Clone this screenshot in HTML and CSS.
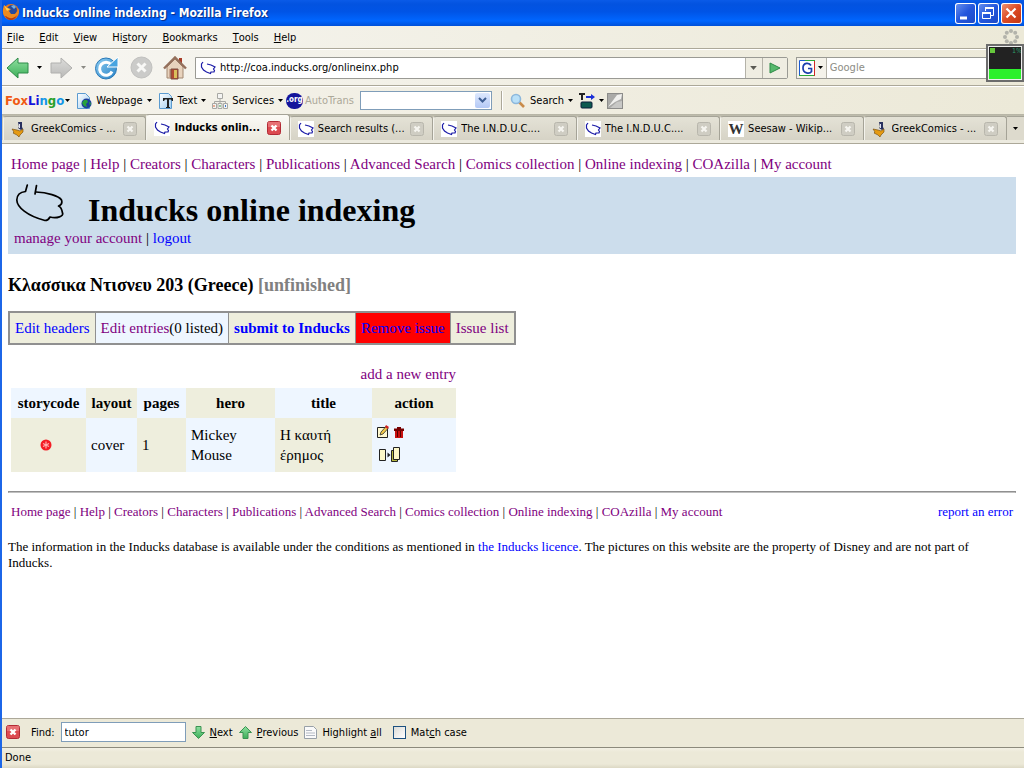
FILE: index.html
```html
<!DOCTYPE html>
<html lang="en">
<head>
    <meta charset="UTF-8">
    <meta name="viewport" content="width=device-width, initial-scale=1">
    <title>Inducks online indexing</title>
    <link rel="stylesheet" href="styles.css">
</head>
<body>
    <!-- Shared icons -->
    <svg class="defs" width="0" height="0">
        <defs>
            <linearGradient id="green" x1="0" y1="0" x2="0" y2="1"><stop offset="0" stop-color="#8fe0a0"/><stop offset="1" stop-color="#3cae58"/></linearGradient>
            <linearGradient id="grey" x1="0" y1="0" x2="0" y2="1"><stop offset="0" stop-color="#dcdcda"/><stop offset="1" stop-color="#b9b9b7"/></linearGradient>
            <linearGradient id="blue" x1="0" y1="0" x2="1" y2="1"><stop offset="0" stop-color="#8ccdf2"/><stop offset="1" stop-color="#2a83c6"/></linearGradient>
            <linearGradient id="page" x1="0" y1="0" x2="1" y2="1"><stop offset="0" stop-color="#ffffff"/><stop offset="1" stop-color="#9fcdf0"/></linearGradient>
        </defs>
        <symbol id="duck" viewBox="0 0 16 16">
            <rect width="16" height="16" fill="#fff"/>
            <path d="M3 2L1.500 4v3l2 3 3 2 4 1.500L11 12h3l.5-1.500L13.500 9l1.500-2-4-2-4-1" fill="none" stroke="#1c1ca8" stroke-width="1.200"/>
        </symbol>
        <symbol id="greek" viewBox="0 0 16 16">
            <path d="M7 1h4v5l1 2-2 1-3-2 1-1z" fill="#28305e"/>
            <path d="M8 3h1v4H8z" fill="#dfe3f5"/>
            <path d="M1 8l5 1 3 1 3-2v3l-3 3-1 2-2-2-4-2 1-1z" fill="#e59a12" stroke="#6b4508" stroke-width=".6"/>
        </symbol>
        <symbol id="close" viewBox="0 0 14 14">
            <rect x=".5" y=".5" width="13" height="13" rx="2" fill="#cfcdc3" stroke="#b8b6ac"/>
            <path d="M4.500 4.500l5 5M9.500 4.500l-5 5" stroke="#f6f5f0" stroke-width="2.200"/>
        </symbol>
        <symbol id="close-red" viewBox="0 0 14 14">
            <rect x=".5" y=".5" width="13" height="13" rx="2" fill="#dc4a50" stroke="#b22a35"/>
            <path d="M1 1h12v5H1z" fill="#ee8a8c" opacity=".6"/>
            <path d="M4.500 4.500l5 5M9.500 4.500l-5 5" stroke="#fff" stroke-width="2.400"/>
        </symbol>
        <symbol id="down" viewBox="0 0 5 3"><path d="M0 0h5L2.500 3z" fill="currentColor"/></symbol>
    </svg>

    <div class="window">
        <header class="titlebar">
            <svg class="app-icon" width="18" height="18" viewBox="0 0 18 18">
                <circle cx="9" cy="9" r="8" fill="#e8761a"/>
                <circle cx="10" cy="7" r="5" fill="#274a9c"/>
                <path d="M9 3l3-1 2 2-2 2z" fill="#6fb0e6"/>
                <path d="M2 2l3 3 4 1-2 2 2 3h4l3-3 1-3c1 6-3 11-8 11S0 12 1 6z" fill="#ee8a1e"/>
                <path d="M2 2l3 3 3 1-3 2z" fill="#ffd34e"/>
                <path d="M4 13c3 3 8 3 11-1-2 6-9 7-12 1z" fill="#b63a10"/>
            </svg>
            <h1 class="title">Inducks online indexing - Mozilla Firefox</h1>
            <div class="window-buttons">
                <button class="wbtn" aria-label="Minimize"><svg width="21" height="21"><path d="M5 15h7" stroke="#fff" stroke-width="3"/></svg></button>
                <button class="wbtn" aria-label="Restore"><svg width="21" height="21" fill="none" stroke="#fff"><path d="M7.500 8V5.500h8v7H13"/><path d="M7 5h9M4 10h9" stroke-width="2"/><path d="M4.500 9.500h8v6h-8z"/></svg></button>
                <button class="wbtn wbtn-close" aria-label="Close"><svg width="21" height="21"><path d="M5.500 5.500l9 9M14.500 5.500l-9 9" stroke="#fff" stroke-width="2.200"/></svg></button>
            </div>
        </header>

        <nav class="menubar">
            <button><u>F</u>ile</button>
            <button><u>E</u>dit</button>
            <button><u>V</u>iew</button>
            <button>Hi<u>s</u>tory</button>
            <button><u>B</u>ookmarks</button>
            <button><u>T</u>ools</button>
            <button><u>H</u>elp</button>
            <svg class="throbber" width="16" height="16" viewBox="0 0 16 16" fill="#b3b3ab">
                <circle cx="8" cy="2" r="2"/><circle cx="12.200" cy="3.800" r="2"/><circle cx="14" cy="8" r="2"/><circle cx="12.200" cy="12.200" r="2"/>
                <circle cx="8" cy="14" r="2"/><circle cx="3.800" cy="12.200" r="2"/><circle cx="2" cy="8" r="2"/><circle cx="3.800" cy="3.800" r="2"/>
            </svg>
        </nav>

        <div class="navbar">
            <button class="nav-btn" aria-label="Back"><svg width="23" height="22"><path d="M1 11L12 1v5h10v10H12v5z" fill="url(#green)" stroke="#2d8a48"/></svg></button>
            <button class="nav-arrow" aria-label="Back history"><svg width="5" height="3"><use href="#down"/></svg></button>
            <button class="nav-btn" aria-label="Forward"><svg width="23" height="22"><path d="M22 11L11 1v5H1v10h10v5z" fill="url(#grey)" stroke="#b0b0ae"/></svg></button>
            <button class="nav-arrow dim" aria-label="Forward history"><svg width="5" height="3"><use href="#down"/></svg></button>
            <button class="nav-btn" aria-label="Reload"><svg width="24" height="24" viewBox="0 0 24 24">
                <circle cx="11" cy="12.500" r="10.500" fill="url(#blue)" stroke="#2878b8"/>
                <path d="M17 15.500a6.500 6.500 0 1 1-1-7" fill="none" stroke="#fff" stroke-width="3"/>
                <path d="M23 1v10H12z" fill="#48a4e0" stroke="#fff"/>
            </svg></button>
            <button class="nav-btn" aria-label="Stop"><svg width="23" height="23">
                <circle cx="11.500" cy="11.500" r="10.500" fill="#cbcbc9" stroke="#c0c0be"/>
                <path d="M7.500 7.500l8 8M15.500 7.500l-8 8" stroke="#f8f8f6" stroke-width="3"/>
            </svg></button>
            <button class="nav-btn nav-home" aria-label="Home"><svg width="24" height="24" viewBox="0 0 24 24">
                <path d="M16 2h3v6h-3z" fill="#a83c28"/>
                <path d="M4 11l8-8 8 8v11H4z" fill="#e8d3bd" stroke="#a28770"/>
                <path d="M1 12.500L12 1.500l11 11" fill="none" stroke="#94705c" stroke-width="2.400"/>
                <path d="M6 13h5v9H6z" fill="#c9a994"/>
                <path d="M8 13h7v10H8z" fill="#b04a32" stroke="#7a5040"/>
                <path d="M11 14h3v8h-3z" fill="#d9c05c"/>
            </svg></button>
            <div class="urlbar">
                <svg class="favicon" width="16" height="16"><use href="#duck"/></svg>
                <input type="text" aria-label="Address" value="http://coa.inducks.org/onlineinx.php">
                <button class="url-drop" aria-label="Show history"><svg width="7" height="4"><use href="#down"/></svg></button>
                <button class="url-go" aria-label="Go"><svg width="12" height="12"><path d="M1 1l10 5L1 11z" fill="#56b96c" stroke="#2f8a48"/></svg></button>
            </div>
            <div class="searchbar">
                <button class="engine" aria-label="Search engine">
                    <svg width="16" height="16" viewBox="0 0 16 16">
                        <rect width="16" height="16" fill="#fff"/>
                        <path d="M.5 16V.5H16" fill="none" stroke="#1b5ad0"/>
                        <path d="M15.500 0v16" stroke="#d02828"/><path d="M0 15.500h15M6 .5h10" stroke="#2aa83a"/>
                        <path d="M12 5.500C10.500 2.500 4 2 4 8s7 6 8.500 3.500V8.500H9" fill="none" stroke="#1b3fae" stroke-width="1.700"/>
                    </svg>
                    <svg width="5" height="3"><use href="#down"/></svg>
                </button>
                <input type="text" aria-label="Search" placeholder="Google">
            </div>
        </div>

        <div class="foxbar">
            <button class="foxlingo"><span><b class="f1">Fox</b><b class="f2">Li</b><b class="f3">n</b><b class="f4">g</b><b class="f3">o</b></span><svg width="5" height="3"><use href="#down"/></svg></button>
            <button class="tool"><svg width="16" height="16" viewBox="0 0 16 16"><path d="M1.500.5h8l4 4v11h-12z" fill="url(#page)" stroke="#5b9bd0"/><circle cx="10.500" cy="10.500" r="5" fill="#1c3f9e"/><path d="M8 7l3 0 1 2-2 2 1 3-3-1-2-3zM13 9l2 1-1 3z" fill="#27a13c"/></svg>Webpage<svg width="5" height="3"><use href="#down"/></svg></button>
            <button class="tool"><svg width="16" height="16" viewBox="0 0 16 16"><path d="M1.500.5h9l3 3v12h-12z" fill="url(#page)" stroke="#5b9bd0"/><path d="M5 5h10v3h-1l-1-1.500h-2V14h1v1H8v-1h1V6.500H7L6 8H5z" fill="#222"/></svg>Text<svg width="5" height="3"><use href="#down"/></svg></button>
            <button class="tool tool-services"><svg width="16" height="16" viewBox="0 0 16 16" fill="#f4f4f2" stroke="#a8a8a4"><path d="M8 5v5M2.500 11V8.500h11V11" fill="none"/><path d="M5.500.5h5v5h-5zM.5 10.500h4v5h-4zM6 10.500h4v5H6zM11.500 10.500h4v5h-4z"/><path d="M2 12v2" stroke="#e06a3a"/><path d="M8 12v2" stroke="#3aa04a"/><path d="M13.500 12v2" stroke="#3a7ad0"/></svg>Services<svg width="5" height="3"><use href="#down"/></svg></button>
            <button class="tool tool-org"><span class="org">.org</span>AutoTrans</button>
            <span class="combo">
                <select aria-label="Translate"><option></option></select>
                <span class="combo-arrow"><svg width="9" height="7"><path d="M1 1l3.500 3.500L8 1" fill="none" stroke="#3f5f94" stroke-width="2"/></svg></span>
            </span>
            <span class="sep"></span>
            <button class="tool tool-search"><svg width="16" height="16" viewBox="0 0 16 16"><path d="M9 9l5 5" stroke="#c98b4a" stroke-width="2.600"/><circle cx="6" cy="6" r="4.500" fill="#b9e0f8" stroke="#8db8dc" stroke-width="1.600"/></svg>Search<svg width="5" height="3"><use href="#down"/></svg></button>
            <button class="tool tool-icons" aria-label="Translate text"><svg width="16" height="16" viewBox="0 0 16 16"><path d="M0 0h6v2H4v5H2V2H0z" fill="#222"/><path d="M7 3h5V1l4 3-4 3V5H7z" fill="#1a2fd8"/><rect x="2" y="9" width="11" height="6" rx="1" fill="#0e5a50" stroke="#0a1c3a"/></svg><svg width="5" height="3"><use href="#down"/></svg></button>
            <button class="tool tool-pen" aria-label="Settings"><svg width="16" height="16" viewBox="0 0 16 16"><rect x=".5" y=".5" width="15" height="15" fill="#aaaaa8" stroke="#8c8c8a"/><path d="M1 14L10 2l5-1-1 5-6 3z" fill="#f0f0ee"/><path d="M3 15l7-6 5-1v7z" fill="#c8c8c6"/></svg></button>
        </div>

        <div class="tabs">
            <button class="tab"><svg width="16" height="16"><use href="#greek"/></svg><span>GreekComics - ...</span><svg width="14" height="14"><use href="#close"/></svg></button>
            <button class="tab active"><svg width="16" height="16"><use href="#duck"/></svg><span>Inducks onlin...</span><svg width="14" height="14"><use href="#close-red"/></svg></button>
            <button class="tab"><svg width="16" height="16"><use href="#duck"/></svg><span>Search results (...</span><svg width="14" height="14"><use href="#close"/></svg></button>
            <button class="tab"><svg width="16" height="16"><use href="#duck"/></svg><span>The I.N.D.U.C....</span><svg width="14" height="14"><use href="#close"/></svg></button>
            <button class="tab"><svg width="16" height="16"><use href="#duck"/></svg><span>The I.N.D.U.C....</span><svg width="14" height="14"><use href="#close"/></svg></button>
            <button class="tab"><i class="wiki">W</i><span>Seesaw - Wikip...</span><svg width="14" height="14"><use href="#close"/></svg></button>
            <button class="tab"><svg width="16" height="16"><use href="#greek"/></svg><span>GreekComics - ...</span><svg width="14" height="14"><use href="#close"/></svg></button>
            <button class="tab-list" aria-label="List all tabs"><svg width="5" height="3"><use href="#down"/></svg></button>
        </div>

        <main class="page">
            <nav class="links">
                <a href="#">Home page</a> | <a href="#">Help</a> | <a href="#">Creators</a> | <a href="#">Characters</a> | <a href="#">Publications</a> | <a href="#">Advanced Search</a> | <a href="#">Comics collection</a> | <a href="#">Online indexing</a> | <a href="#">COAzilla</a> | <a href="#">My account</a>
            </nav>
            <div class="banner">
                <div class="banner-top">
                    <svg width="50" height="39" viewBox="-1 0 50 39" fill="none" stroke="#000" stroke-width="1.700" stroke-linecap="round" stroke-linejoin="round">
                        <path d="M12.300 2L10.500 8.500C5 9 2 11 1.800 17C2 24 12 33 30 37.500C33 37.500 34 36 35 34C42 36 49 33 47.500 30C47 27 46 24 43.500 23C46.500 22 47.500 20 46.500 17C44 13 32 9.500 21 9"/>
                        <path d="M21.500 2.500L20 11"/>
                    </svg>
                    <h2>Inducks online indexing</h2>
                </div>
                <div class="account"><a href="#">manage your account</a> | <a href="#" class="new">logout</a></div>
            </div>

            <h3>Κλασσικα Ντισνευ 203 (Greece) <span class="status">[unfinished]</span></h3>

            <table class="actions">
                <tr>
                    <td><a href="#" class="new">Edit headers</a></td>
                    <td class="on"><a href="#">Edit entries</a>(0 listed)</td>
                    <td><a href="#" class="new"><b>submit to Inducks</b></a></td>
                    <td class="remove"><a href="#" class="new">Remove issue</a></td>
                    <td><a href="#">Issue list</a></td>
                </tr>
            </table>

            <div class="entries-wrap">
                <div class="add"><a href="#">add a new entry</a></div>
                <table class="entries">
                    <tr>
                        <th class="c-code">storycode</th><th class="c-layout">layout</th><th class="c-pages">pages</th><th class="c-hero">hero</th><th class="c-title">title</th><th class="c-action">action</th>
                    </tr>
                    <tr>
                        <td class="center"><svg width="12" height="12" viewBox="0 0 12 12"><circle cx="6" cy="6" r="5.500" fill="#f41c24"/><path d="M6 2.500v7M3 4.500l6 3M9 4.500l-6 3" stroke="#ffb0b0" stroke-width="1.200"/></svg></td>
                        <td>cover</td>
                        <td>1</td>
                        <td>Mickey Mouse</td>
                        <td>Η καυτή έρημος</td>
                        <td>
                            <div class="icons">
                                <a href="#" aria-label="Edit"><svg width="12" height="13" viewBox="0 0 12 13"><path d="M.5 2.500h10v10H.5z" fill="#fff9d0" stroke="#222"/><path d="M3 10l1-3 5-5.500 2 2-5 5.500z" fill="#f0c848" stroke="#333" stroke-width=".8"/><path d="M9 0l3 2-1.500 2L8 2z" fill="#d02020"/></svg></a>
                                <a href="#" aria-label="Delete" class="trash"><svg width="10" height="11" viewBox="0 0 10 11"><path d="M0 1.500h3V0h4v1.500h3V4H0z" fill="#700"/><path d="M1 4h8v7H1z" fill="#c81010"/><path d="M3.500 4v6M6.500 4v6" stroke="#500"/></svg></a>
                            </div>
                            <div class="icons copy">
                                <a href="#" aria-label="Copy"><svg width="22" height="15" viewBox="0 0 22 15" fill="#fdf8c8" stroke="#222"><path d="M.5 2.500h6v11h-6z"/><path d="M12.500 3.500h6v11h-6z" fill="#b8b840"/><path d="M14.500.5h6v12h-6z"/><path d="M8.500 5.500l3 2.500-3 2.500z" fill="#222" stroke="none"/></svg></a>
                            </div>
                        </td>
                    </tr>
                </table>
            </div>

            <hr>
            <footer>
                <div class="foot-row">
                    <nav>
                        <a href="#">Home page</a> | <a href="#">Help</a> | <a href="#">Creators</a> | <a href="#">Characters</a> | <a href="#">Publications</a> | <a href="#">Advanced Search</a> | <a href="#">Comics collection</a> | <a href="#">Online indexing</a> | <a href="#">COAzilla</a> | <a href="#">My account</a>
                    </nav>
                    <a href="#" class="new">report an error</a>
                </div>
                <p>The information in the Inducks database is available under the conditions as mentioned in <a href="#" class="new">the Inducks licence</a>. The pictures on this website are the property of Disney and are not part of Inducks.</p>
            </footer>
        </main>

        <div class="findbar">
            <button aria-label="Close find bar"><svg width="14" height="14"><use href="#close-red"/></svg></button>
            <label for="find">Find:</label>
            <input type="text" id="find" value="tutor">
            <button class="find-btn"><svg width="13" height="13"><path d="M4 .5h5v6h3.500l-6 6-6-6H4z" fill="url(#green)" stroke="#3a9352"/></svg><span><u>N</u>ext</span></button>
            <button class="find-btn"><svg width="13" height="13"><path d="M4 12.500h5v-6h3.500l-6-6-6 6H4z" fill="url(#green)" stroke="#3a9352"/></svg><span><u>P</u>revious</span></button>
            <button class="find-btn"><svg width="13" height="13"><path d="M.5.5h9l3 3v9H.5z" fill="#fafafa" stroke="#98a0a8"/><path d="M2 4.500h6M2 7h9M2 9.500h9" stroke="#b4bac4"/></svg><span>Highlight <u>a</u>ll</span></button>
            <label class="check"><input type="checkbox"><span>Mat<u>c</u>h case</span></label>
        </div>
        <div class="statusbar">Done</div>

        <div class="cpu">
            <span class="cpu-dot"></span><span class="cpu-text">1%</span>
        </div>
    </div>
</body>
</html>
```
FILE: styles.css
```css
* {
    box-sizing: border-box;
}

body {
    margin: 0;
    font-family: "DejaVu Sans Condensed", "Noto Sans", sans-serif;
    font-size: 11px;
    color: #000;
    background: #fff;
}

button {
    font: inherit;
    color: inherit;
    background: none;
    border: none;
    padding: 0;
    margin: 0;
    display: flex;
    align-items: center;
    white-space: nowrap;
}

input, select {
    font: inherit;
    min-width: 0;
}

svg {
    display: block;
    flex-shrink: 0;
}

.defs {
    position: absolute;
}

.window {
    position: relative;
    display: flex;
    flex-direction: column;
    height: 100vh;
    overflow: hidden;
    border-left: 2px solid #1c66e8;
}

/* Title bar */
.titlebar {
    display: flex;
    align-items: center;
    flex-shrink: 0;
    height: 26px;
    padding-right: 2px;
    background: linear-gradient(#0a5be8, #0353e0 15%, #0054e6 45%, #0066ff 80%, #0050d8);
}

.app-icon {
    margin-bottom: 2px;
}

.title {
    flex: 1;
    margin: 0 0 0 2px;
    font-size: 12px;
    font-weight: bold;
    color: #fff;
    text-shadow: 1px 1px 1px #0a2a80;
}

.window-buttons {
    display: flex;
    gap: 2px;
}

.wbtn {
    width: 21px;
    height: 21px;
    border-radius: 3px;
    background: linear-gradient(135deg, #6b94f0, #2456dc 50%, #1c48c4);
    box-shadow: inset 0 0 0 1px #fff;
}

.wbtn-close {
    background: linear-gradient(135deg, #f09878, #dc4a24 50%, #c03410);
}

/* Menu */
.menubar {
    display: flex;
    align-items: center;
    flex-shrink: 0;
    gap: 15px;
    height: 23px;
    padding: 0 5px;
    background: linear-gradient(90deg, #f6f5f0, #ece9d8);
    border-bottom: 1px solid #aca899;
}

.throbber {
    margin-left: auto;
}

/* Navigation */
.navbar {
    display: flex;
    align-items: center;
    flex-shrink: 0;
    height: 37px;
    padding-left: 3px;
    background: linear-gradient(90deg, #f7f6f2, #ece9d8);
    border-top: 1px solid #fff;
    border-bottom: 1px solid #aca899;
}

.nav-btn {
    width: 24px;
    justify-content: center;
    margin-right: 10px;
}

.nav-btn:first-child, .nav-btn:nth-child(3) {
    margin-right: 0;
}

.nav-home {
    margin-right: 8px;
}

.nav-arrow {
    width: 20px;
    justify-content: center;
}

.nav-arrow.dim {
    color: #8a8a84;
    margin-right: 2px;
}

.urlbar {
    flex: 593;
    display: flex;
    align-items: center;
    height: 22px;
    background: #fff;
    border: 1px solid #9a9a94;
    border-radius: 0 2px 2px 0;
}

.favicon {
    margin: 0 4px;
}

.urlbar input, .searchbar input {
    flex: 1;
    height: 20px;
    padding: 0;
    border: none;
    outline: none;
    background: transparent;
}

.url-drop, .url-go {
    height: 20px;
    justify-content: center;
    color: #5a5a54;
    background: #efede2;
    border-left: 1px solid #b4b2a8;
}

.url-drop {
    width: 17px;
}

.url-go {
    width: 25px;
}

.searchbar {
    flex: 228;
    display: flex;
    height: 22px;
    margin-left: 8px;
    background: #fff;
    border: 1px solid #9a9a94;
    border-right: none;
}

.engine {
    width: 30px;
    justify-content: center;
    gap: 3px;
    background: #f4f2ea;
    border-right: 1px solid #b4b2a8;
}

.searchbar input {
    padding-left: 3px;
}

.searchbar input::placeholder {
    color: #8c8c84;
    opacity: 1;
}

/* FoxLingo toolbar */
.foxbar {
    display: flex;
    align-items: center;
    flex-shrink: 0;
    height: 28px;
    padding-left: 3px;
    background: linear-gradient(90deg, #f5f3ec, #ece9d8);
    border-top: 1px solid #fff;
}

.foxlingo {
    font-size: 13px;
    gap: 1px;
    margin-right: 6px;
}

.f1 { color: #f05a14; }
.f2 { color: #1414dc; }
.f3 { color: #1496e6; }
.f4 { color: #28a028; }

.tool {
    gap: 4px;
    margin-right: 6px;
}

.tool-services {
    margin-right: 3px;
}

.tool-org {
    gap: 2px;
    color: #aca899;
}

.org {
    width: 17px;
    height: 16px;
    line-height: 14px;
    border-radius: 8px;
    background: #14149c;
    color: #fff;
    font-size: 8px;
    font-weight: bold;
    text-align: center;
}

.combo {
    position: relative;
    width: 132px;
    height: 19px;
}

.combo select {
    width: 100%;
    height: 19px;
    appearance: none;
    background: #fff;
    border: 1px solid #7f9db9;
    border-radius: 0;
}

.combo-arrow {
    position: absolute;
    top: 2px;
    right: 2px;
    width: 15px;
    height: 15px;
    display: flex;
    align-items: center;
    justify-content: center;
    background: linear-gradient(#dde8fd, #b4c9f6);
    border-radius: 2px;
    pointer-events: none;
}

.sep {
    width: 2px;
    height: 19px;
    margin: 0 7px 0 9px;
    border-left: 1px solid #aca899;
    background: #fff;
}

.tool-icons {
    margin-right: 3px;
}

/* Tabs */
.tabs {
    display: flex;
    align-items: flex-end;
    flex-shrink: 0;
    height: 29px;
    padding-left: 1px;
    background: linear-gradient(#b5b3a4, #cbc8b8 4px, #d2cfc0);
    border-bottom: 3px solid #eceadf;
    box-shadow: 0 1px 0 #aca899;
}

.tab {
    flex: 1;
    min-width: 0;
    height: 24px;
    padding: 0 8px 0 7px;
    gap: 4px;
    background: linear-gradient(#e4e2d6, #d6d3c6);
    border: 1px solid #a5a397;
    border-left-color: #f4f3ec;
    border-bottom: none;
    border-radius: 3px 3px 0 0;
}

.tab span {
    flex: 1;
    overflow: hidden;
    text-align: left;
}

.tab.active {
    height: 26px;
    background: linear-gradient(#fbfaf6, #eceadf);
    font-weight: bold;
}

.wiki {
    width: 16px;
    height: 16px;
    background: #fff;
    font: bold 15px/16px "Liberation Serif", serif;
    color: #333;
}

.tab-list {
    width: 17px;
    height: 24px;
    justify-content: center;
    background: #dddacd;
    border-top: 1px solid #a5a397;
}

/* Page */
.page {
    flex: 1;
    overflow: hidden;
    padding: 11px 8px 0 6px;
    font-family: "Liberation Serif", serif;
    font-size: 15px;
    line-height: 20px;
}

.page a {
    color: #800080;
    text-decoration: none;
}

.page a.new {
    color: #0000ff;
}

.links {
    padding: 0 3px 3px;
}

.banner {
    height: 77px;
    padding: 6px;
    background: #ccddec;
}

.banner-top {
    display: flex;
    height: 46px;
    gap: 24px;
}

.banner h2 {
    margin: 0;
    font-size: 32px;
    line-height: 54px;
}

.account {
    line-height: 18px;
}

.page h3 {
    margin: 20px 0 15px;
    font-size: 18px;
    line-height: 22px;
}

.status {
    color: #808080;
}

.actions {
    border-collapse: collapse;
    border: 2px solid #909090;
}

.actions td {
    height: 32px;
    padding: 0 5px;
    border: 1px solid #909090;
    background: #eeeedd;
}

.actions td.on {
    background: #eef6ff;
}

.actions td.remove {
    background: #ff0000;
}

.entries-wrap {
    width: max-content;
    margin: 19px 0 0 3px;
}

.add {
    text-align: right;
    padding-bottom: 4px;
}

.entries {
    border-collapse: collapse;
}

.entries th, .entries td {
    padding: 5px;
    background: #eeeedd;
}

.entries td {
    padding: 7px 5px;
}

.entries th:nth-child(odd), .entries td:nth-child(even) {
    background: #eef6ff;
}

.c-code { width: 75px; }
.c-layout { width: 51px; }
.c-pages { width: 49px; }
.c-hero { width: 89px; }
.c-title { width: 97px; }
.c-action { width: 84px; }

.entries .center {
    padding-right: 11px;
}

.entries .center svg {
    margin: 0 auto;
}

.icons {
    display: flex;
    align-items: flex-start;
    gap: 5px;
    height: 22px;
}

.trash {
    padding-top: 2px;
}

.copy {
    height: 18px;
    padding-left: 2px;
}

.page hr {
    margin: 19px 0 11px;
    border: 1px solid #909090;
    border-bottom-color: #c0c0c0;
}

footer {
    font-size: 13px;
    line-height: 16px;
}

.foot-row {
    display: flex;
    justify-content: space-between;
    padding: 0 3px;
}

footer p {
    margin: 19px 0 0;
}

/* Find bar */
.findbar {
    display: flex;
    align-items: center;
    flex-shrink: 0;
    height: 29px;
    padding: 0 0 2px 4px;
    background: #ece9d8;
    border-top: 1px solid #aca899;
}

.findbar label {
    margin-left: 11px;
}

.findbar > input {
    width: 125px;
    height: 20px;
    margin-left: 6px;
    padding: 0 3px;
    border: 1px solid #7f9db9;
}

.find-btn {
    gap: 5px;
    margin-left: 6px;
}

.check {
    display: flex;
    align-items: center;
    gap: 5px;
}

.check input {
    appearance: none;
    width: 13px;
    height: 13px;
    margin: 0;
    border: 1px solid #1c5180;
    background: linear-gradient(135deg, #dcdcd7, #fff);
}

.statusbar {
    flex-shrink: 0;
    height: 21px;
    padding: 0 3px;
    line-height: 19px;
    background: linear-gradient(#f2f0e4, #ece9d8 4px, #ece9d8 16px, #dcd8c4);
    border-top: 1px solid #8c8a7c;
}

/* CPU meter floating over the window */
.cpu {
    position: absolute;
    top: 44px;
    right: 0;
    width: 38px;
    height: 38px;
    display: flex;
    justify-content: space-between;
    padding: 1px 0 0 2px;
    border: 2px solid #6c6c6c;
    outline: 1px solid #eee;
    outline-offset: -3px;
    background: linear-gradient(#222 23px, #2cf02c 23px);
}

.cpu-dot {
    width: 5px;
    height: 5px;
    margin-top: 1px;
    background: #66c83c;
}

.cpu-text {
    font-size: 7px;
    line-height: 8px;
    color: #2c9c6c;
}
```
